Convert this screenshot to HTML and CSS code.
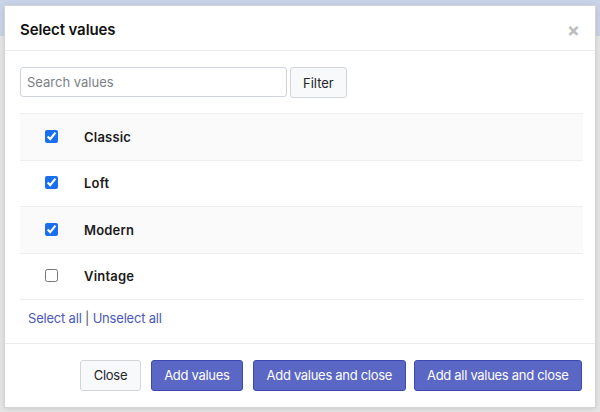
FILE: index.html
```html
<!DOCTYPE html>
<html>
<head>
<meta charset="utf-8">
<link rel="stylesheet" href="styles.css">
</head>
<body>
<div class="backdrop">
  <div class="modal">
    <div class="modal-header">
      <h4 class="modal-title">Select values</h4>
      <span class="close-x">×</span>
    </div>
    <div class="modal-body">
      <div class="search-row">
        <input class="search-input" type="text" placeholder="Search values">
        <button class="btn btn-light">Filter</button>
      </div>
      <div class="value-table">
        <div class="value-row striped">
          <div class="cell-check"><input type="checkbox" checked></div>
          <div class="cell-label">Classic</div>
        </div>
        <div class="value-row">
          <div class="cell-check"><input type="checkbox" checked></div>
          <div class="cell-label">Loft</div>
        </div>
        <div class="value-row striped">
          <div class="cell-check"><input type="checkbox" checked></div>
          <div class="cell-label">Modern</div>
        </div>
        <div class="value-row">
          <div class="cell-check"><input type="checkbox"></div>
          <div class="cell-label">Vintage</div>
        </div>
      </div>
      <div class="select-links"><a href="#">Select all</a> | <a href="#">Unselect all</a></div>
    </div>
    <div class="modal-footer">
      <button class="btn btn-light">Close</button>
      <button class="btn btn-primary">Add values</button>
      <button class="btn btn-primary">Add values and close</button>
      <button class="btn btn-primary btn-last">Add all values and close</button>
    </div>
  </div>
</div>
</body>
</html>
```

FILE: styles.css
```css
* { box-sizing: border-box; }
html, body { margin: 0; padding: 0; }
body {
  width: 600px;
  height: 412px;
  overflow: hidden;
  font-family: Inter, "Liberation Sans", sans-serif;
  font-size: 13px;
  color: #212529;
  background: linear-gradient(to bottom, #cad4e8 0, #cad4e8 36px, #e6e6e6 36px, #e6e6e6 100%);
}
.backdrop {
  padding: 5px 4px 0 4px;
}
.modal {
  width: 592px;
  height: 403px;
  background: #fff;
  border: 1px solid #d4d4d4;
  box-shadow: 0 1px 6px rgba(0,0,0,0.12);
  display: flex;
  flex-direction: column;
}
.modal-header {
  display: flex;
  align-items: center;
  justify-content: space-between;
  height: 45px;
  padding: 3px 15px 0 15px;
  border-bottom: 1px solid #e9ecef;
}
.modal-title {
  margin: 0;
  font-size: 15px;
  font-weight: 600;
  color: #111;
  letter-spacing: -0.1px;
}
.close-x {
  font-size: 19px;
  font-weight: 700;
  color: #bdbdbd;
  line-height: 1;
  margin-top: 1px;
}
.modal-body {
  padding: 16px 12px 0 15px;
  flex: 1;
}
.search-row {
  display: flex;
  align-items: flex-start;
  gap: 3px;
}
.search-input {
  width: 267px;
  height: 30px;
  border: 1px solid #ced4da;
  border-radius: 3px;
  padding: 0 6px;
  font-family: inherit;
  font-size: 13px;
  color: #495057;
}
.search-input::placeholder { color: #7a7f85; }
.btn {
  font-family: inherit;
  font-size: 13px;
  height: 31px;
  padding: 0 12px;
  border-radius: 3px;
  border: 1px solid transparent;
  cursor: pointer;
}
.btn-light {
  background: #f8f9fa;
  border-color: #d3d6d9;
  color: #212529;
}
.modal-footer .btn { letter-spacing: -0.3px; padding: 0 12.5px; }
.btn-primary {
  background: #5b67c5;
  border-color: #3b4aaf;
  color: #fff;
}
.btn-last { margin-left: -2px; }
.value-table {
  margin-top: 15px;
  border-bottom: 1px solid #eeeeee;
}
.value-row {
  display: grid;
  grid-template-columns: 64px 1fr;
  align-items: center;
  height: 46.5px;
  border-top: 1px solid #eeeeee;
}
.value-row.striped { background: #fafafa; }
.cell-check {
  display: flex;
  justify-content: center;
}
.cell-check input {
  margin: 0 1px 1px 0;
  width: 13px;
  height: 13px;
  accent-color: #1a6ef0;
}
.cell-label {
  font-weight: 600;
  color: #1a1a1a;
  letter-spacing: 0.2px;
}
.select-links {
  padding: 9px 8px 16px 8px;
  line-height: 18px;
  color: #555;
  letter-spacing: -0.2px;
}
.select-links a {
  color: #4a59b8;
  text-decoration: none;
}
.modal-footer {
  display: flex;
  justify-content: flex-end;
  align-items: center;
  gap: 10px;
  height: 64px;
  padding: 0 13px 1px 15px;
  border-top: 1px solid #e9ecef;
}
```
